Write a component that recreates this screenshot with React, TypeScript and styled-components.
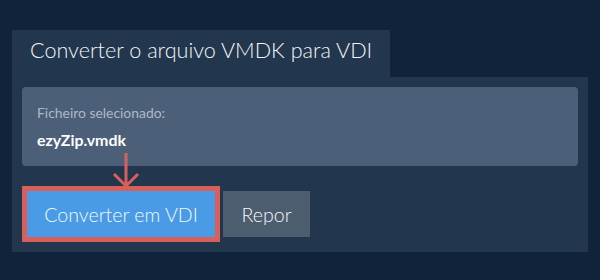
import React from 'react'
import styled, { createGlobalStyle } from 'styled-components'

const GlobalStyle = createGlobalStyle`
  html, body {
    margin: 0;
    padding: 0;
    background: #11233a;
    font-family: Lato, "Open Sans", sans-serif;
  }
`

const Page = styled.div`
  width: 600px;
  height: 280px;
  box-sizing: border-box;
  padding: 30px 12px 0;
`

const Tab = styled.div`
  display: inline-block;
  background: #22364d;
  color: #f2f5f8;
  font-weight: 300;
  font-size: 21.6px;
  line-height: 26px;
  padding: 7px 18px 14px;
`

const Panel = styled.div`
  background: #22364d;
  padding: 10px;
`

const FileBox = styled.div`
  background: #4b6078;
  border-radius: 4px;
  padding: 16px 15px 16px;
  height: 79px;
  box-sizing: border-box;
`

const Label = styled.div`
  color: #aeb8c4;
  font-size: 13.9px;
  line-height: 19px;
`

const FileName = styled.div`
  color: #ffffff;
  font-weight: 700;
  font-size: 15.9px;
  line-height: 20px;
  margin-top: 8px;
`

const Actions = styled.div`
  display: flex;
  align-items: center;
  margin-top: 20px;
`

const Highlight = styled.div`
  position: relative;
  border: 5px solid #d9605a;
  display: flex;
`

const Arrow = styled.svg`
  position: absolute;
  left: 84px;
  top: -38px;
  width: 30px;
  height: 36px;
  overflow: visible;
`

const Button = styled.button<{ $primary?: boolean }>`
  border: 0;
  margin: 0;
  padding: 0;
  font-family: Lato, "Open Sans", sans-serif;
  font-weight: 300;
  font-size: 19.6px;
  color: #f4f7fa;
  height: 46px;
  width: ${(p) => (p.$primary ? '188px' : '87px')};
  background: ${(p) => (p.$primary ? '#4a9be6' : '#4b5d6e')};
  margin-left: ${(p) => (p.$primary ? '0' : '3px')};
`

export default function App() {
  return (
    <>
      <GlobalStyle />
      <Page>
        <Tab>Converter o arquivo VMDK para VDI</Tab>
        <Panel>
          <FileBox>
            <Label>Ficheiro selecionado:</Label>
            <FileName>ezyZip.vmdk</FileName>
          </FileBox>
          <Actions>
            <Highlight>
              <Arrow viewBox="0 0 30 36">
                <path
                  d="M15 0 V33 M3 21 L15 33 L27 21"
                  fill="none"
                  stroke="#d9605a"
                  strokeWidth="3"
                />
              </Arrow>
              <Button $primary>Converter em VDI</Button>
            </Highlight>
            <Button>Repor</Button>
          </Actions>
        </Panel>
      </Page>
    </>
  )
}
